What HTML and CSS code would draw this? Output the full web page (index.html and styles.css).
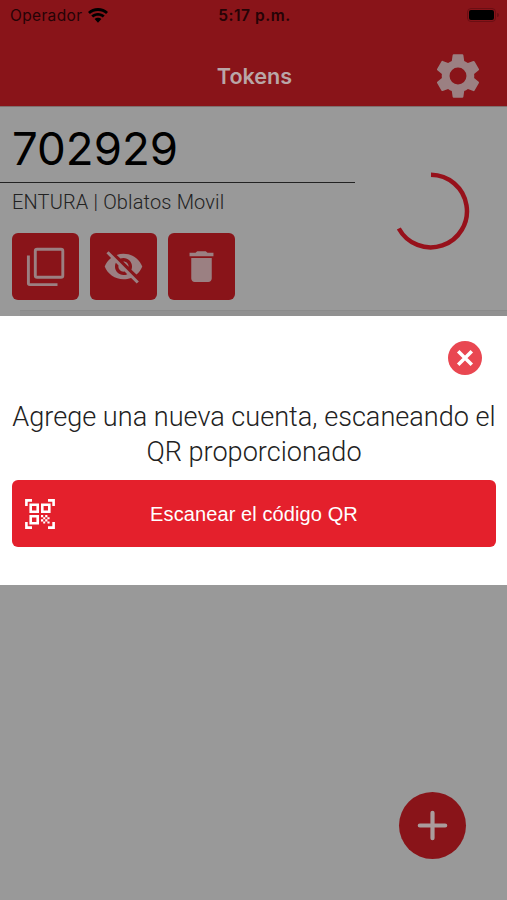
FILE: index.html
```html
<!DOCTYPE html>
<html lang="es">
<head>
<meta charset="utf-8">
<meta name="viewport" content="width=device-width, initial-scale=1">
<title>Tokens</title>
<link rel="stylesheet" href="styles.css">
</head>
<body>
<div class="screen">
  <header class="header">
    <div class="status">
      <div class="carrier"><span class="carrier-name">Operador</span>
        <svg class="wifi" viewBox="0 0 20 15"><path d="M10 0C6.100 0 2.600 1.500 0 4L1.900 6C4.100 4 6.900 2.900 10 2.900S15.900 4 18.100 6L20 4C17.400 1.500 13.900 0 10 0ZM10 5C7.400 5 5.100 6 3.300 7.500L5.200 9.500C6.500 8.400 8.100 7.800 10 7.800s3.500.6 4.800 1.700l1.900-2C14.900 6 12.600 5 10 5ZM10 9.700c-1.300 0-2.500.5-3.400 1.300L10 14.700l3.400-3.700C12.500 10.200 11.300 9.700 10 9.700Z"/></svg>
      </div>
      <time class="clock">5:17 p.m.</time>
      <div class="battery"><span class="battery-shell"><span class="battery-level"></span></span><span class="battery-tip"></span></div>
    </div>
    <div class="nav">
      <h1 class="title">Tokens</h1>
      <svg class="gear" viewBox="0 0 24 24"><path d="M19.430 12.980c.04-.32.07-.64.07-.98s-.03-.66-.07-.98l2.110-1.650c.19-.15.24-.42.12-.64l-2-3.460c-.12-.22-.39-.3-.61-.22l-2.490 1c-.52-.4-1.080-.73-1.690-.98l-.38-2.650C14.460 2.180 14.250 2 14 2h-4c-.25 0-.46.18-.49.42l-.38 2.650c-.61.25-1.170.59-1.690.98l-2.490-1c-.23-.09-.49 0-.61.22l-2 3.460c-.13.22-.07.49.12.64l2.110 1.650c-.04.32-.07.65-.07.98s.03.66.07.98l-2.110 1.650c-.19.15-.24.42-.12.64l2 3.460c.12.22.39.3.61.22l2.490-1c.52.4 1.080.73 1.690.98l.38 2.650c.03.24.24.42.49.42h4c.25 0 .46-.18.49-.42l.38-2.650c.61-.25 1.170-.59 1.690-.98l2.490 1c.23.09.49 0 .61-.22l2-3.460c.12-.22.07-.49-.12-.64l-2.110-1.650zM12 15.900a3.900 3.900 0 1 1 0-7.800 3.900 3.900 0 0 1 0 7.800z"/></svg>
    </div>
  </header>

  <main class="token">
    <div class="token-info">
      <div class="code"><span class="code-text">702929</span></div>
      <div class="account">ENTURA | Oblatos Movil</div>
      <div class="actions">
        <button class="action" aria-label="Copiar"><svg viewBox="0 0 67 67"><rect x="23.300" y="16.300" width="27.500" height="28" rx="1.800" fill="none" stroke="currentColor" stroke-width="2.900"/><path d="M16.400 22.500V50.300Q16.400 51.600 17.700 51.600H45.500" fill="none" stroke="currentColor" stroke-width="2.900"/></svg></button>
        <button class="action" aria-label="Ocultar"><svg class="icon" viewBox="0 0 24 24"><path fill="currentColor" d="M12 7c2.760 0 5 2.240 5 5 0 .65-.13 1.260-.36 1.830l2.920 2.920c1.510-1.260 2.700-2.890 3.430-4.750-1.730-4.390-6-7.500-11-7.500-1.400 0-2.740.25-3.980.7l2.160 2.160C10.740 7.130 11.350 7 12 7zM2 4.270l2.280 2.280.46.460C3.080 8.300 1.780 10.020 1 12c1.730 4.390 6 7.500 11 7.500 1.550 0 3.030-.3 4.380-.84l.42.420L19.730 22 21 20.730 3.270 3 2 4.270zM7.530 9.800l1.550 1.550c-.05.21-.08.43-.08.65 0 1.660 1.340 3 3 3 .22 0 .44-.03.65-.08l1.550 1.550c-.67.33-1.410.53-2.200.53-2.760 0-5-2.240-5-5 0-.79.2-1.530.53-2.200zm4.310-.78l3.150 3.150.02-.16c0-1.660-1.340-3-3-3l-.17.010z"/></svg></button>
        <button class="action" aria-label="Eliminar"><svg class="icon" viewBox="0 0 24 24"><path fill="currentColor" d="M6 19c0 1.100.9 2 2 2h8c1.100 0 2-.9 2-2V7H6v12zM19 4h-3.500l-1-1h-5l-1 1H5v2h14V4z"/></svg></button>
      </div>
    </div>
    <div class="timer"><svg class="timer-ring" viewBox="0 0 80 80"><path d="M41 3.800A36.300 36.300 0 1 1 8.800 57.500"/></svg></div>
  </main>
  <div class="divider"></div>

  <section class="dialog" role="dialog">
    <button class="close" aria-label="Cerrar"><svg viewBox="0 0 34 34"><circle cx="17" cy="17" r="17" fill="#e94751"/><path d="M10.200 10.200 23.800 23.800M23.800 10.200 10.200 23.800" stroke="#fff" stroke-width="3.500"/></svg></button>
    <p class="message"><span class="line line-one">Agrege una nueva cuenta, escaneando el</span> <span class="line line-two">QR proporcionado</span></p>
    <button class="scan">
      <svg class="qr" viewBox="0 0 30 30"><g fill="none" stroke="currentColor" stroke-width="2.600"><path d="M1.400 7V1.400H7M23 1.400h5.600V7M1.400 23v5.600H7M23 28.600h5.600V23"/><path d="M5.700 5.700h7v7h-7zM17.300 5.700h7v7h-7zM5.700 17.300h7v7h-7z"/></g><path fill="currentColor" d="M16 16h2.200v2.200H16zM20.200 16h2.200v2.200h-2.200zM18.200 18.200h2v2h-2zM22.400 18.200h2.200v2h-2.200zM16 20.200h2.200v2.200H16zM20.200 20.200h2.200v2.200h-2.200zM18.200 22.400h2v2.200h-2zM22.400 22.400h2.200v2.200h-2.200z"/></svg>
      <span class="scan-label">Escanear el código QR</span>
    </button>
  </section>

  <footer class="footer"><button class="add" aria-label="Agregar"><svg viewBox="0 0 67 67"><path d="M33.500 20.800V46.200M20.800 33.500H46.200" stroke="currentColor" stroke-width="4.200" stroke-linecap="round"/></svg></button></footer>
</div>
</body>
</html>
```
FILE: styles.css
```css
* { box-sizing: border-box; }
body { margin: 0; background: #999; }
button { border: 0; padding: 0; display: block; font: inherit; }
svg { display: block; }

.screen {
  width: 507px;
  height: 900px;
  display: flex;
  flex-direction: column;
  overflow: hidden;
  background: #999;
  font-family: Roboto, sans-serif;
}

.header {
  height: 107px;
  flex: none;
  background: #891419;
  border-bottom: 1px solid #80706f;
}
.status {
  height: 30px;
  display: grid;
  grid-template-columns: 1fr auto 1fr;
  align-items: center;
  padding: 0 8px 0 10px;
  font-family: Inter, sans-serif;
  color: #250306;
}
.carrier { display: flex; align-items: center; gap: 6px; }
.carrier-name { font-size: 15.500px; letter-spacing: 0.350px; }
.wifi { width: 20px; height: 15px; fill: #000; }
.clock { font-size: 15.500px; font-weight: 600; letter-spacing: 0.550px; }
.battery { display: flex; align-items: center; justify-content: flex-end; gap: 1px; }
.battery-shell { width: 29px; height: 14px; padding: 1px; border: 1px solid #6b0e13; border-radius: 4px; }
.battery-level { display: block; height: 10px; border-radius: 2px; background: #000; }
.battery-tip { width: 2px; height: 4px; border-radius: 0 2px 2px 0; background: #6b0e13; }

.nav {
  height: 76px;
  display: grid;
  grid-template-columns: 1fr auto 1fr;
  align-items: center;
  padding: 15px 23px 0;
}
.title {
  grid-column: 2;
  margin: 0 -1px 0 1px;
  font: 600 21.600px/30px Inter, sans-serif;
  color: #b9a6a7;
}
.gear { width: 52px; height: 52px; justify-self: end; fill: #9b8082; }

.token { height: 203px; flex: none; display: flex; }
.token-info { width: 355px; }
.code { height: 76px; padding: 14px 12px 0; border-bottom: 1px solid #222; }
.code-text { display: block; font: 400 45.600px/56px Inter, sans-serif; color: #000; }
.account { height: 50px; padding: 7px 12px 0; font-size: 20px; font-weight: 300; line-height: 25px; letter-spacing: 0.150px; color: #222; }
.actions { display: flex; gap: 11px; padding-left: 12px; }
.action {
  width: 67px;
  height: 67px;
  display: grid;
  place-items: center;
  border-radius: 6px;
  background: #891419;
  color: #9b8082;
}
.icon { width: 41px; height: 41px; }
.timer { flex: 1; padding: 64px 0 0 35px; }
.timer-ring { width: 80px; height: 80px; fill: none; stroke: #97111b; stroke-width: 4.500; }
.divider { height: 6px; flex: none; margin-left: 20px; border-top: 1px solid #8b8b8b; background: #919191; }

.dialog {
  height: 269px;
  flex: none;
  display: flex;
  flex-direction: column;
  padding: 25px 11px 38px 12px;
  background: #fff;
}
.close { width: 34px; height: 34px; align-self: flex-end; margin-right: 14px; background: none; }
.message { margin: 25px 0 0; font-size: 27.100px; font-weight: 300; line-height: 35px; text-align: center; color: #222; }
.line { display: block; white-space: nowrap; }
.scan {
  height: 67px;
  flex: none;
  margin-top: 10px;
  display: grid;
  grid-template-columns: 30px 1fr 30px;
  align-items: center;
  padding: 0 13px;
  border-radius: 6px;
  background: #e4202c;
  color: #fff;
}
.qr { width: 30px; height: 30px; }
.scan-label { font: 20px/26px "Liberation Sans", Arial, sans-serif; letter-spacing: 0.100px; }

.footer { flex: 1; display: flex; align-items: flex-end; justify-content: flex-end; padding: 0 41px 41px 0; }
.add { width: 67px; height: 67px; border-radius: 50%; background: #891419; color: #aa9c9c; }
```
